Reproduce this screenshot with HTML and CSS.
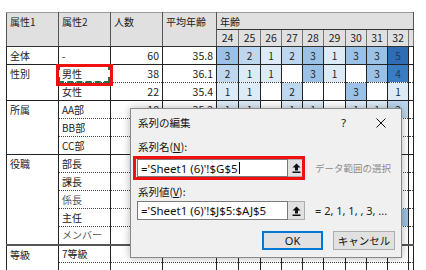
FILE: index.html
```html
<!doctype html>
<html lang="ja">
	<head>
		<meta charset="UTF-8" />
		<title>系列の編集</title>
		<link rel="stylesheet" href="styles.css">
	</head>

	<body>
		<div class="sheet">
			<table class="grid">
				<colgroup>
					<col class="col-attr" />
					<col class="col-attr" />
					<col class="col-attr" />
					<col class="col-avg" />
					<col class="col-age-wide" />
					<col class="col-age-wide" />
					<col class="col-age" />
					<col class="col-age" />
					<col class="col-age" />
					<col class="col-age-wide" />
					<col class="col-age" />
					<col class="col-age" />
					<col class="col-age" />
					<col class="col-edge" />
				</colgroup>
				<thead>
					<tr class="head-top">
						<th rowspan="2">属性1</th>
						<th rowspan="2">属性2</th>
						<th rowspan="2">人数</th>
						<th rowspan="2">平均年齢</th>
						<th colspan="10" class="age-title">年齢</th>
					</tr>
					<tr class="head-ages">
						<th>24</th><th>25</th><th>26</th><th>27</th><th>28</th><th>29</th><th>30</th><th>31</th><th>32</th><th></th>
					</tr>
				</thead>
				<tbody>
					<tr class="group">
						<td class="attr">全体</td><td>-</td><td class="num">60</td><td class="num">35.8</td>
						<td class="v3">3</td><td class="v2">2</td><td class="v1">1</td><td class="v2">2</td><td class="v3">3</td><td class="v1">1</td><td class="v3">3</td><td class="v3">3</td><td class="v5">5</td><td></td>
					</tr>
					<tr class="group">
						<td class="attr" rowspan="2">性別</td><td>男性</td><td class="num">38</td><td class="num">36.1</td>
						<td class="v2">2</td><td class="v1">1</td><td class="v1">1</td><td></td><td class="v3">3</td><td class="v1">1</td><td></td><td class="v3">3</td><td class="v4">4</td><td></td>
					</tr>
					<tr class="sub">
						<td>女性</td><td class="num">22</td><td class="num">35.4</td>
						<td class="v1">1</td><td class="v1">1</td><td></td><td class="v2">2</td><td></td><td></td><td class="v3">3</td><td></td><td class="v1">1</td><td></td>
					</tr>
					<tr class="group">
						<td class="attr" rowspan="3">所属</td><td>AA部</td><td class="num">18</td><td class="num">35.2</td>
						<td class="v1">1</td><td class="v1">1</td><td></td><td class="v1">1</td><td class="v1">1</td><td></td><td class="v1">1</td><td class="v1">1</td><td class="v2">2</td><td></td>
					</tr>
					<tr class="sub">
						<td>BB部</td><td class="num">12</td><td class="num">36.0</td>
						<td></td><td class="v1">1</td><td></td><td></td><td class="v1">1</td><td></td><td class="v1">1</td><td></td><td></td><td></td>
					</tr>
					<tr class="sub">
						<td>CC部</td><td class="num">30</td><td class="num">35.9</td>
						<td class="v1">1</td><td></td><td class="v1">1</td><td class="v1">1</td><td class="v1">1</td><td class="v1">1</td><td class="v1">1</td><td class="v2">2</td><td></td><td></td>
					</tr>
					<tr class="group">
						<td class="attr" rowspan="5">役職</td><td>部長</td><td class="num">3</td><td class="num">48.3</td>
						<td></td><td></td><td></td><td></td><td></td><td></td><td></td><td></td><td></td><td></td>
					</tr>
					<tr class="sub">
						<td>課長</td><td class="num">6</td><td class="num">42.5</td>
						<td></td><td></td><td></td><td></td><td></td><td></td><td></td><td></td><td></td><td></td>
					</tr>
					<tr class="sub">
						<td class="soft">係長</td><td class="num">9</td><td class="num">38.1</td>
						<td></td><td></td><td></td><td></td><td class="v1">1</td><td></td><td></td><td class="v1">1</td><td></td><td></td>
					</tr>
					<tr class="sub">
						<td>主任</td><td class="num">14</td><td class="num">33.6</td>
						<td class="v1">1</td><td></td><td></td><td class="v1">1</td><td class="v1">1</td><td></td><td class="v2">2</td><td class="v1">1</td><td class="v3">3</td><td></td>
					</tr>
					<tr class="sub">
						<td class="soft">メンバー</td><td class="num">28</td><td class="num">29.4</td>
						<td class="v2">2</td><td class="v2">2</td><td class="v1">1</td><td class="v1">1</td><td class="v2">2</td><td class="v1">1</td><td class="v1">1</td><td class="v2">2</td><td></td><td></td>
					</tr>
					<tr class="group split">
						<td class="attr" rowspan="2">等級</td><td>7等級</td><td class="num">4</td><td class="num">45.0</td>
						<td></td><td></td><td></td><td></td><td></td><td></td><td></td><td></td><td></td><td></td>
					</tr>
					<tr class="sub">
						<td></td><td></td><td></td>
						<td></td><td></td><td></td><td></td><td></td><td></td><td></td><td></td><td></td><td></td>
					</tr>
				</tbody>
			</table>

			<div class="marquee"></div>
			<div class="mark mark-cell"></div>

			<div class="dialog">
				<div class="dlg-title">
					<span>系列の編集</span>
					<span class="dlg-tools">
						<span class="help">?</span>
						<svg class="close" width="10" height="10" viewBox="0 0 10 10">
							<path d="M0.5 0.5 L9.5 9.5 M9.5 0.5 L0.5 9.5" stroke="#111" stroke-width="1" fill="none" />
						</svg>
					</span>
				</div>
				<div class="dlg-body">
					<div class="dlg-label">系列名(<u>N</u>):</div>
					<div class="field">
						<span class="ref-input">='Sheet1 (6)'!$G$5<span class="caret"></span></span>
						<span class="ref-btn">
							<svg width="9" height="10" viewBox="0 0 9 10">
								<path d="M4.5 0.5 L8.5 4.5 L6 4.5 L6 7.5 L3 7.5 L3 4.5 L0.5 4.5 Z" fill="#111" />
								<rect x="0.5" y="8.5" width="8" height="1.5" fill="#111" />
							</svg>
						</span>
						<span class="hint">データ範囲の選択</span>
						<div class="mark mark-field"></div>
					</div>
					<div class="dlg-label">系列値(<u>V</u>):</div>
					<div class="field tall">
						<span class="ref-input">='Sheet1 (6)'!$J$5:$AJ$5</span>
						<span class="ref-btn">
							<svg width="9" height="10" viewBox="0 0 9 10">
								<path d="M4.5 0.5 L8.5 4.5 L6 4.5 L6 7.5 L3 7.5 L3 4.5 L0.5 4.5 Z" fill="#111" />
								<rect x="0.5" y="8.5" width="8" height="1.5" fill="#111" />
							</svg>
						</span>
						<span class="hint preview">= 2, 1, 1, , 3, ...</span>
					</div>
					<div class="dlg-actions">
						<button class="btn default">OK</button>
						<button class="btn">キャンセル</button>
					</div>
				</div>
			</div>
		</div>
	</body>
</html>
```

FILE: styles.css
```css
*,
*::before,
*::after {
	box-sizing: border-box;
	margin: 0;
	padding: 0;
}

body {
	background: #fff;
	width: 426px;
	height: 270px;
	overflow: hidden;
	font-family: 'Noto Sans CJK JP', sans-serif;
	color: #222;
}

.sheet {
	position: relative;
	padding: 12px 0 0 6px;
	height: 270px;
}

/* spreadsheet grid */

.grid {
	border-collapse: collapse;
	table-layout: fixed;
	width: 407px;
	font-size: 10px;
	line-height: 14px;
	border-left: 1px solid #444;
}

.col-attr {
	width: 52px;
}

.col-avg {
	width: 54px;
}

.col-age-wide {
	width: 22px;
}

.col-age {
	width: 21px;
}

.col-edge {
	width: 5px;
}

th {
	background: #e0e0e0;
	font-weight: 400;
	text-align: left;
	vertical-align: top;
	padding: 2px 3px 0;
	border-left: 1px solid #555;
	border-right: 1px solid #555;
	border-top: 1px solid #9a9a9a;
	border-bottom: 1px solid #333;
	overflow: hidden;
	white-space: nowrap;
}

.head-top th {
	height: 17px;
}

.head-ages th {
	height: 17px;
	text-align: center;
	font-size: 10.5px;
	padding: 1px 0 0;
	border-left-color: #777;
	border-right-color: #777;
}

td {
	height: 18px;
	padding: 0 3px;
	border-left: 1px solid #222;
	border-right: 1px solid #222;
	white-space: nowrap;
	overflow: hidden;
	vertical-align: middle;
}

tr.group td {
	border-top: 1px solid #222;
}

tr.sub td {
	border-top: 1px dotted #444;
}

tr.split td {
	border-top: 2px solid #555;
}

td.attr {
	vertical-align: top;
	padding-top: 2px;
}

td.soft {
	color: #555;
}

td.num {
	text-align: right;
	font-size: 10.5px;
}

td[class^='v'] {
	text-align: center;
	padding: 0;
	font-size: 10px;
}

.v1 {
	background: #ddebf7;
}

.v2 {
	background: #bdd7ee;
}

.v3 {
	background: #9bc2e6;
}

.v4 {
	background: #3a7cc2;
	color: #1f3864;
}

.v5 {
	background: #2e6db3;
	color: #1f3864;
}

/* selection markers */

.marquee {
	position: absolute;
	left: 58px;
	top: 64px;
	width: 52px;
	height: 19px;
	border: 2px dashed #217346;
}

.mark {
	position: absolute;
	border: 3px solid #f01010;
}

.mark-cell {
	left: 56px;
	top: 64px;
	width: 57px;
	height: 22px;
}

/* series dialog */

.dialog {
	position: absolute;
	left: 130px;
	top: 108px;
	width: 272px;
	height: 150px;
	background: #f0f0f0;
	border: 1px solid #8a8a8a;
	box-shadow: 0 0 8px rgba(0, 0, 0, 0.3);
	font-size: 10.5px;
	color: #111;
}

.dlg-title {
	height: 28px;
	display: flex;
	align-items: center;
	justify-content: space-between;
	padding: 0 15px 0 7px;
	line-height: 14px;
}

.dlg-tools {
	display: flex;
	align-items: center;
	gap: 30px;
}

.help {
	font-family: 'Noto Sans', sans-serif;
	font-size: 11px;
}

.dlg-body {
	padding: 3px 6px 0;
}

.dlg-label {
	line-height: 14px;
	padding-left: 1px;
}

.dlg-label u {
	text-underline-offset: 1px;
}

.field {
	position: relative;
	display: flex;
	align-items: center;
	height: 18px;
	margin: 5px 0 8px;
}

.field.tall {
	height: 19px;
	margin: 2px 0 11px;
}

.ref-input {
	display: flex;
	align-items: center;
	width: 151px;
	height: 100%;
	background: #fff;
	border: 1px solid #7a7a7a;
	padding-left: 3px;
	font-family: 'Noto Sans', sans-serif;
	font-size: 11.5px;
	white-space: nowrap;
}

.caret {
	width: 1px;
	height: 12px;
	background: #000;
	margin-left: 1px;
}

.ref-btn {
	display: flex;
	align-items: center;
	justify-content: center;
	width: 17px;
	height: 100%;
	background: #e1e1e1;
	border: 1px solid #adadad;
	border-left: none;
}

.hint {
	margin-left: 10px;
	color: #8c8c8c;
	font-size: 9.5px;
	white-space: nowrap;
}

.hint.preview {
	color: #222;
	font-family: 'Noto Sans', sans-serif;
	font-size: 11px;
}

.mark-field {
	left: -4px;
	top: -3px;
	width: 172px;
	height: 24px;
}

.dlg-actions {
	display: flex;
	justify-content: flex-end;
	gap: 10px;
	padding-right: 0;
}

.btn {
	height: 19px;
	width: 62px;
	background: #e1e1e1;
	border: 1px solid #adadad;
	font-family: 'Noto Sans CJK JP', sans-serif;
	font-size: 10.5px;
	line-height: 14px;
	color: #111;
}

.btn.default {
	width: 61px;
	border-color: #0078d7;
	box-shadow: inset 0 0 0 1px #0078d7;
	font-family: 'Noto Sans', sans-serif;
	font-size: 11px;
}
```
